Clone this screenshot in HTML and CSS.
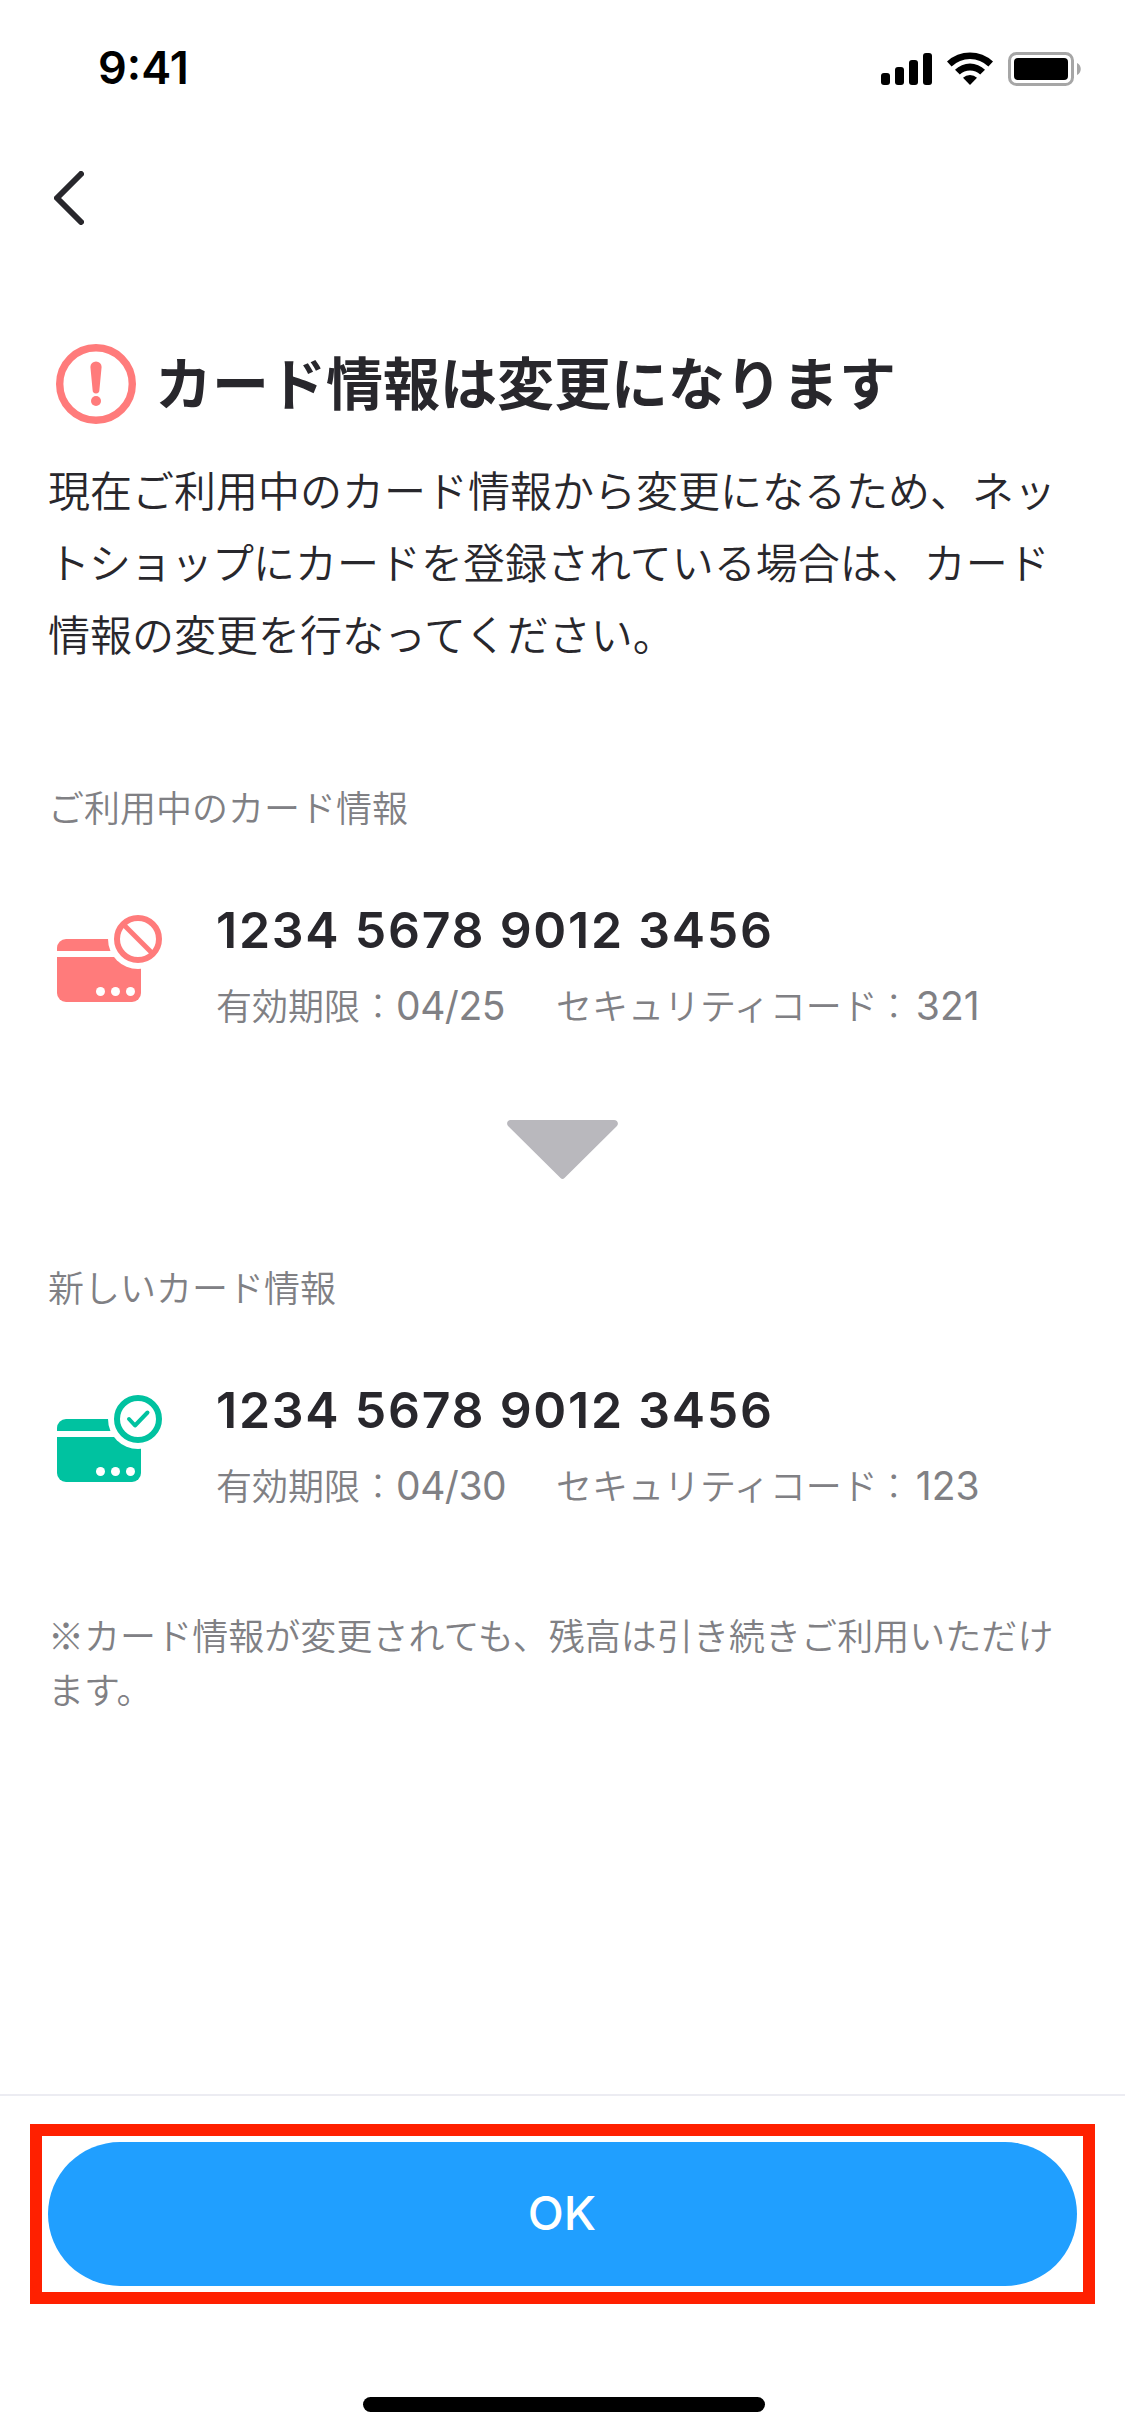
FILE: index.html
```html
<!DOCTYPE html>
<html lang="ja">
<head>
  <meta charset="UTF-8">
  <meta name="viewport" content="width=device-width, initial-scale=1.0">
  <title>カード情報の変更</title>
  <link rel="stylesheet" href="styles.css">
</head>
<body>
  <div class="screen">
    <div class="status-bar">
      <span class="time">9:41</span>
      <div class="status-icons">
        <svg class="signal" width="51" height="32" viewBox="0 0 51 32">
          <rect x="0" y="20" width="9" height="12" rx="3"/>
          <rect x="14" y="14" width="9" height="18" rx="3"/>
          <rect x="28" y="7" width="9" height="25" rx="3"/>
          <rect x="42" y="0" width="9" height="32" rx="3"/>
        </svg>
        <svg class="wifi" width="46" height="33" viewBox="0 0 46 33">
          <path d="M0 9.6a33.5 33.5 0 0 1 46 0l-4.6 4.8a26.5 26.5 0 0 0-36.8 0z"/>
          <path d="M8 17.7a21.5 21.5 0 0 1 30 0l-4.8 4.8a14.8 14.8 0 0 0-20.4 0z"/>
          <path d="M16 25.7a10.5 10.5 0 0 1 14 0l-7 7.3z"/>
        </svg>
        <svg class="battery" width="73" height="34" viewBox="0 0 73 34">
          <rect x="1.5" y="1.5" width="63" height="31" rx="7" fill="none" stroke="#a6a6a6" stroke-width="3"/>
          <rect x="6" y="6" width="54" height="22" rx="4"/>
          <path d="M69 11c5 2 5 10 0 12z" fill="#a6a6a6"/>
        </svg>
      </div>
    </div>

    <div class="nav">
      <svg width="30" height="54" viewBox="0 0 30 54">
        <path d="M27 3L3 27l24 24" fill="none" stroke="#28272c" stroke-width="6" stroke-linecap="round" stroke-linejoin="round"/>
      </svg>
    </div>

    <main class="content">
      <div class="heading">
        <svg width="80" height="80" viewBox="0 0 80 80" fill="#ff7b7b">
          <circle cx="40" cy="40" r="36.3" fill="none" stroke="#ff7b7b" stroke-width="7.4"/>
          <path d="M34.4 23a5.6 5.6 0 0 1 11.2 0L43.4 46a3.4 3.4 0 0 1-6.8 0z"/>
          <circle cx="40" cy="57" r="5"/>
        </svg>
        <h1>カード情報は変更になります</h1>
      </div>
      <p class="lead">現在ご利用中のカード情報から変更になるため、ネッ<br><span class="tight">トショップ</span>にカードを登録されている場合は、カード<br>情報の変更を行なってください。</p>

      <p class="label">ご利用中のカード情報</p>
      <div class="card">
        <svg class="card-icon" width="105" height="87" viewBox="0 0 105 87" fill="#ff7b7b">
          <rect x="0" y="24" width="84" height="63" rx="9"/>
          <g fill="#fff">
            <rect x="0" y="36" width="84" height="6"/>
            <circle cx="81" cy="24" r="30"/>
            <circle cx="43.5" cy="76.5" r="4.5"/>
            <circle cx="58.5" cy="76.5" r="4.5"/>
            <circle cx="73.5" cy="76.5" r="4.5"/>
          </g>
          <g fill="none" stroke="#ff7b7b">
            <circle cx="81" cy="24" r="21" stroke-width="6"/>
            <path d="M67 10l28 28" stroke-width="5"/>
          </g>
        </svg>
        <div>
          <div class="number">1234 5678 9012 3456</div>
          <div class="meta">
            <span class="expiry">有効期限<i>：</i><b>04/25</b></span>
            <span class="code">セキュリティコード<i>：</i><b>321</b></span>
          </div>
        </div>
      </div>

      <svg class="arrow" width="111" height="60" viewBox="0 0 111 60">
        <path d="M4 0h103c3.600 0 5.200 3.800 2.700 6.300L57.500 58a2.800 2.800 0 0 1-4 0L1.300 6.300C-1.200 3.800.4 0 4 0z" fill="#b9b8bd"/>
      </svg>

      <p class="label label-new">新しいカード情報</p>
      <div class="card">
        <svg class="card-icon" width="105" height="87" viewBox="0 0 105 87" fill="#00c2a0">
          <rect x="0" y="24" width="84" height="63" rx="9"/>
          <g fill="#fff">
            <rect x="0" y="36" width="84" height="6"/>
            <circle cx="81" cy="24" r="30"/>
            <circle cx="43.5" cy="76.5" r="4.5"/>
            <circle cx="58.5" cy="76.5" r="4.5"/>
            <circle cx="73.5" cy="76.5" r="4.5"/>
          </g>
          <g fill="none" stroke="#00c2a0">
            <circle cx="81" cy="24" r="21" stroke-width="6"/>
            <path d="M72 24l6 6.500L90.500 17.500" stroke-width="4" stroke-linecap="round" stroke-linejoin="round"/>
          </g>
        </svg>
        <div>
          <div class="number">1234 5678 9012 3456</div>
          <div class="meta">
            <span class="expiry">有効期限<i>：</i><b>04/30</b></span>
            <span class="code">セキュリティコード<i>：</i><b>123</b></span>
          </div>
        </div>
      </div>

      <p class="note">※カード情報が変更されても、残高は引き続きご利用いただけ<br>ます。</p>
    </main>

    <footer class="footer">
      <div class="highlight">
        <button class="ok-button">OK</button>
      </div>
      <div class="home-indicator"></div>
    </footer>
  </div>
</body>
</html>
```
FILE: styles.css
```css
* {
  box-sizing: border-box;
}
body {
  margin: 0;
  background-color: #fff;
  color: #28272c;
  font-family: Inter, "Noto Sans CJK JP", sans-serif;
}
h1, p {
  margin: 0;
}
svg {
  display: block;
  flex-shrink: 0;
}
.screen {
  width: 1125px;
  height: 2436px;
  display: flex;
  flex-direction: column;
  overflow: hidden;
}

/* status bar */
.status-bar {
  height: 132px;
  padding: 0 44px 0 98px;
  display: flex;
  justify-content: space-between;
}
.time {
  margin-top: 38px;
  font-size: 45px;
  line-height: 60px;
  font-weight: 600;
  color: #000;
}
.status-icons {
  display: flex;
  align-items: flex-start;
  padding-top: 52px;
}
.signal {
  margin-top: 1px;
}
.wifi {
  margin-left: 15px;
}
.battery {
  margin-left: 15px;
}
.nav {
  height: 132px;
  padding: 39px 54px;
}

/* content */
.content {
  flex: 1;
  padding: 80px 48px 0;
}
.heading {
  display: flex;
  align-items: center;
  height: 80px;
  padding-left: 8px;
}
h1 {
  margin-left: 19px;
  padding-top: 2px;
  font-size: 57px;
  line-height: 80px;
  font-weight: 700;
  white-space: nowrap;
}
.lead {
  margin-top: 32px;
  font-size: 42px;
  line-height: 72px;
  font-weight: 350;
  white-space: nowrap;
}
.tight {
  letter-spacing: -1px;
}
.label {
  margin-top: 110px;
  font-size: 36px;
  line-height: 54px;
  font-weight: 350;
  color: #808084;
}
.label-new {
  margin-top: 82px;
}
.card {
  display: flex;
  align-items: flex-start;
  height: 150px;
  margin-top: 59px;
  padding-left: 9px;
}
.card-icon {
  margin-top: 20px;
}
.number {
  margin: 5px 0 0 54px;
  font-size: 50px;
  line-height: 60px;
  font-weight: 600;
  letter-spacing: 1.75px;
}
.meta {
  display: flex;
  margin: 19px 0 0 54px;
  font-size: 36px;
  line-height: 54px;
  font-weight: 350;
  color: #808084;
  white-space: nowrap;
}
.meta i {
  font-style: normal;
  font-weight: 300;
}
.meta b {
  font-size: 39px;
  font-weight: 400;
}
.expiry {
  width: 340px;
}
.expiry b {
  letter-spacing: -0.5px;
}
.code i {
  margin: 0 4px 0 -2px;
}
.arrow {
  margin: 75px auto 0;
}
.note {
  margin-top: 82px;
  font-family: "Noto Sans CJK JP", sans-serif;
  font-size: 36px;
  line-height: 54px;
  font-weight: 350;
  letter-spacing: 0.05px;
  color: #808084;
  white-space: nowrap;
}

/* footer */
.footer {
  height: 342px;
  border-top: 2px solid #ececf2;
  padding: 28px 30px 0;
}
.highlight {
  height: 180px;
  padding: 6px;
  border: 12px solid #ff2000;
}
.ok-button {
  display: block;
  width: 100%;
  height: 144px;
  padding: 0 1px 4px 0;
  border: none;
  border-radius: 72px;
  background-color: #209fff;
  color: #fff;
  font-family: inherit;
  font-size: 47px;
  font-weight: 500;
}
.home-indicator {
  width: 402px;
  height: 15px;
  margin: 93px 0 0 333px;
  border-radius: 8px;
  background-color: #000;
}
```
